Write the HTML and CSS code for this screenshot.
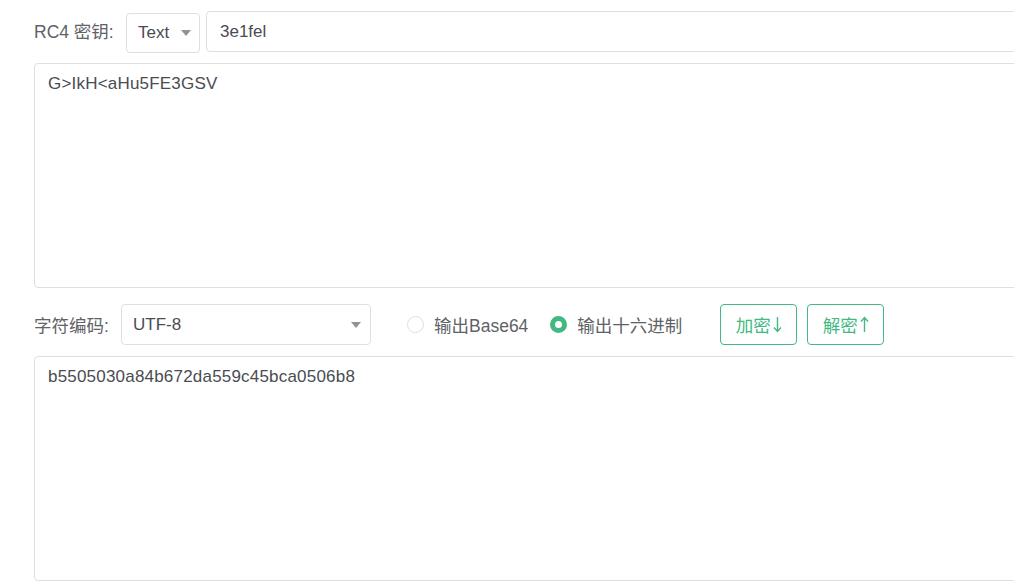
FILE: index.html
```html
<!DOCTYPE html>
<html lang="zh">
<head>
<meta charset="utf-8">
<link rel="stylesheet" href="styles.css">
</head>
<body>
<div class="page">
  <div class="row row-key">
    <span class="label">RC4 密钥:</span>
    <div class="select select-type">
      <span class="select-value">Text</span>
      <span class="caret"></span>
    </div>
    <div class="input key-input">3e1fel</div>
  </div>
  <div class="textarea ta-top">G&gt;IkH&lt;aHu5FE3GSV</div>
  <div class="row row-opts">
    <span class="label">字符编码:</span>
    <div class="select select-enc">
      <span class="select-value">UTF-8</span>
      <span class="caret"></span>
    </div>
    <label class="radio radio-first">
      <span class="radio-dot"></span>
      <span class="radio-text">输出Base64</span>
    </label>
    <label class="radio radio-checked">
      <span class="radio-dot"></span>
      <span class="radio-text">输出十六进制</span>
    </label>
    <button class="btn btn-enc">加密<svg class="arrow" width="9" height="17" viewBox="0 0 9 17"><path d="M4.5 1 V15.5 M1 11.5 L4.5 15.5 L8 11.5" fill="none" stroke="currentColor" stroke-width="1.4"/></svg></button>
    <button class="btn btn-dec">解密<svg class="arrow" width="9" height="17" viewBox="0 0 9 17"><path d="M4.5 16 V1.5 M1 5.5 L4.5 1.5 L8 5.5" fill="none" stroke="currentColor" stroke-width="1.4"/></svg></button>
  </div>
  <div class="textarea ta-bottom">b5505030a84b672da559c45bca0506b8</div>
</div>
</body>
</html>
```
FILE: styles.css
```css
html, body {
  margin: 0;
  padding: 0;
  background: #fff;
  overflow: hidden;
}
body {
  font-family: "Liberation Sans", Arial, "Noto Sans CJK SC", sans-serif;
  font-size: 17px;
  color: #606266;
}
.page {
  width: 1100px;
  padding: 11px 0 0 34px;
}
.row {
  display: flex;
  align-items: center;
}
.label {
  color: #606266;
  white-space: nowrap;
  font-size: 17.5px;
}
.row-key {
  align-items: flex-start;
}
.row-key .label {
  line-height: 42px;
  width: 92px;
}
.select {
  box-sizing: border-box;
  height: 40px;
  border: 1px solid #dcdfe6;
  border-radius: 4px;
  display: flex;
  align-items: center;
  justify-content: space-between;
  background: #fff;
  color: #4a4c52;
}
.select-type {
  margin-top: 2px;
  width: 74px;
  padding: 0 8px 0 11px;
}
.select-enc {
  width: 250px;
  height: 41px;
  padding: 0 9px 0 11px;
}
.caret {
  width: 0;
  height: 0;
  border-left: 5px solid transparent;
  border-right: 5px solid transparent;
  border-top: 6px solid #909399;
}
.input {
  box-sizing: border-box;
  margin-left: 6px;
  flex: 1;
  height: 41px;
  border: 1px solid #dcdfe6;
  border-radius: 4px;
  padding: 0 13px;
  line-height: 39px;
  color: #4a4c52;
}
.textarea {
  box-sizing: border-box;
  height: 225px;
  border: 1px solid #dcdfe6;
  border-radius: 4px;
  padding: 8px 13px;
  line-height: 24px;
  color: #4a4c52;
  letter-spacing: 0.2px;
}
.ta-top {
  margin-top: 10px;
}
.ta-bottom {
  margin-top: 11px;
}
.row-opts {
  margin-top: 16px;
  height: 41px;
}
.row-opts .label {
  width: 87px;
}
.radio {
  display: flex;
  align-items: center;
  color: #606266;
  cursor: pointer;
  font-size: 17.5px;
}
.radio-first {
  margin-left: 36px;
}
.radio + .radio {
  margin-left: 22px;
}
.radio-dot {
  box-sizing: border-box;
  width: 17px;
  height: 17px;
  border-radius: 50%;
  border: 1px solid #dcdfe6;
  background: #fff;
  margin-right: 10px;
}
.radio-checked .radio-dot {
  border: 5px solid #42b983;
  background: #fff;
}
.btn {
  box-sizing: border-box;
  height: 41px;
  width: 77px;
  border: 1px solid #42b983;
  border-radius: 4px;
  background: #fff;
  color: #42b983;
  font-family: inherit;
  font-size: 17.5px;
  padding: 0;
  display: flex;
  align-items: center;
  justify-content: center;
  gap: 2px;
}
.arrow {
  display: block;
}
.btn-enc {
  margin-left: 38px;
}
.btn-dec {
  margin-left: 10px;
}
```
